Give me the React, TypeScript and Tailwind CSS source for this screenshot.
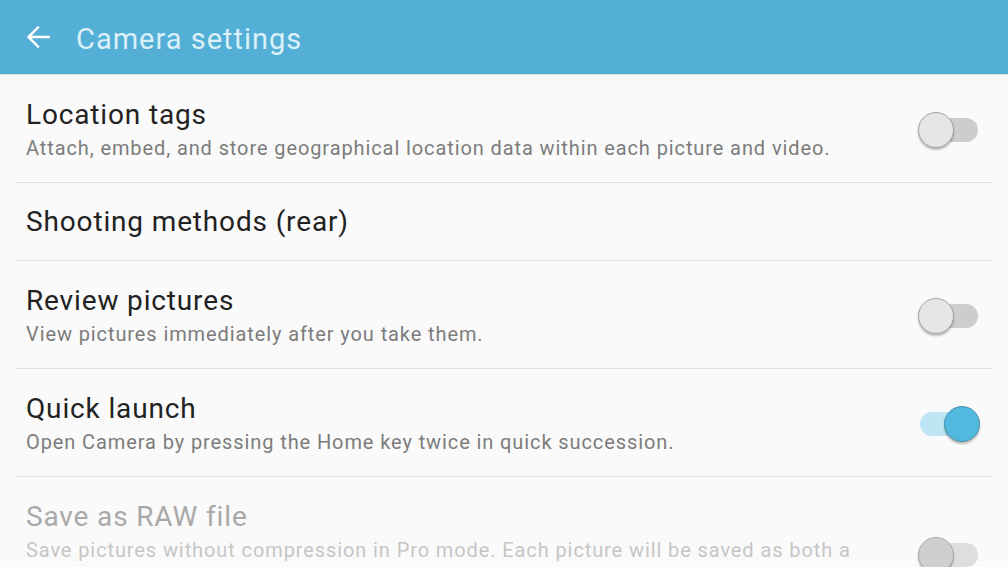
import React from "react";

function Toggle({ on = false, disabled = false, className = "" }: { on?: boolean; disabled?: boolean; className?: string }) {
  const track = on ? "bg-[#bfe5f4]" : disabled ? "bg-[#dedede]" : "bg-[#cdcdcd]";
  const knob = on
    ? "bg-[#53b8de] border-[#4a90ad] left-[26px]"
    : disabled
    ? "bg-[#cfcfcf] border-[#a9a9a9] left-0"
    : "bg-[#e6e6e6] border-[#a4a4a4] left-0";
  return (
    <div className={`relative w-[62px] h-[36px] shrink-0 ${className}`}>
      <div className={`absolute left-[2px] right-[2px] top-[6px] h-[24px] rounded-full ${track}`} />
      <div className={`absolute top-0 w-[36px] h-[36px] rounded-full border ${knob} shadow-[0_2px_2px_rgba(0,0,0,0.25)]`} />
    </div>
  );
}

function Row({
  title,
  sub,
  toggle,
  on,
}: {
  title: string;
  sub?: string;
  toggle?: boolean;
  on?: boolean;
}) {
  return (
    <div
      className={`flex items-center pl-[10px] pr-[12px] border-b border-[#e2e2e2] ${
        sub ? "pt-[22px] pb-[20px]" : "pt-[21px] pb-[20px]"
      }`}
    >
      <div className="flex-1 min-w-0 pr-[28px]">
        <div className="text-[28px] leading-[36px] tracking-[0.85px] text-[#222222]">{title}</div>
        {sub && <div className="mt-[1px] text-[20px] leading-[28px] tracking-[0.9px] text-[#7c7c7c]">{sub}</div>}
      </div>
      {toggle && <Toggle on={on} />}
    </div>
  );
}

export default function App() {
  return (
    <div
      className="w-[1008px] h-[567px] overflow-hidden bg-[#fafafa]"
      style={{ fontFamily: "Roboto, 'Noto Sans', sans-serif" }}
    >
      <div className="h-[75px] bg-[#53afd6] border-b border-[#d9dcdd] flex items-center pl-[20px]">
        <svg width="36" height="36" viewBox="0 0 24 24" fill="#ffffff">
          <path d="M20 11.1H7.6l5.5-5.5L12 4.5l-7.5 7.5 7.5 7.5 1.1-1.1-5.5-5.5H20z" />
        </svg>
        <div className="ml-[20px] mt-[4px] text-[29px] tracking-[1px] text-[#dbf0f8] leading-none">Camera settings</div>
      </div>
      <div className="px-4">
        <Row
          title="Location tags"
          sub="Attach, embed, and store geographical location data within each picture and video."
          toggle
        />
        <Row title="Shooting methods (rear)" />
        <Row title="Review pictures" sub="View pictures immediately after you take them." toggle />
        <Row
          title="Quick launch"
          sub="Open Camera by pressing the Home key twice in quick succession."
          toggle
          on
        />
        <div className="flex items-start pl-[10px] pr-[12px] pt-[22px] pb-[20px]">
          <div className="flex-1 min-w-0 pr-[28px]">
            <div className="text-[28px] leading-[36px] tracking-[0.85px] text-[#a9a9a9]">Save as RAW file</div>
            <div className="mt-[1px] text-[20px] leading-[28px] tracking-[0.9px] text-[#c6c6c6]">
              Save pictures without compression in Pro mode. Each picture will be saved as both a RAW file (DNG
              format) and a JPEG file.
            </div>
          </div>
          <Toggle disabled className="mt-[38px]" />
        </div>
      </div>
    </div>
  );
}
